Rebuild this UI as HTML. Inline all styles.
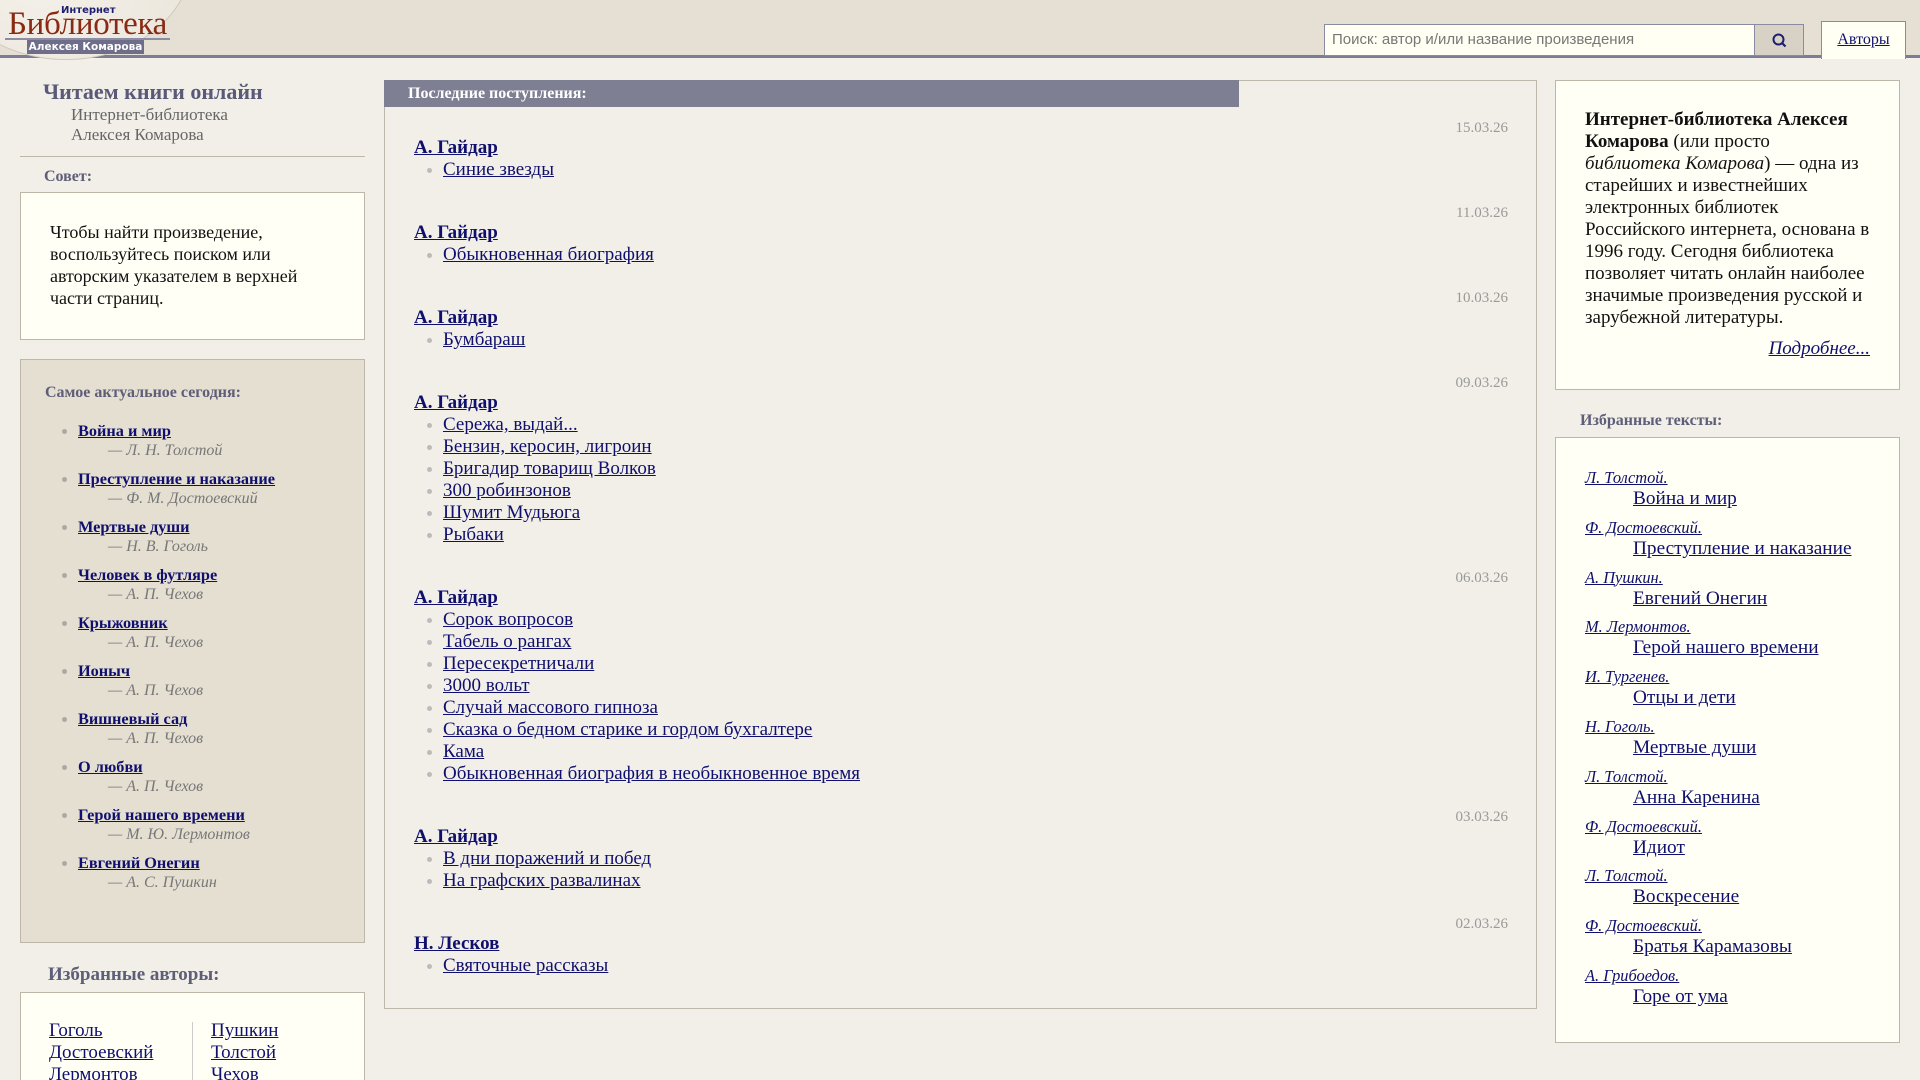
<!DOCTYPE html>
<html><head><meta charset="utf-8"><style>
*{box-sizing:border-box;margin:0;padding:0}
html{width:1920px;height:1080px;overflow:hidden}
body{width:1920px;height:1080px;overflow:hidden;background:#f2efe8;font-family:"Liberation Serif","Noto Serif CJK SC",serif;color:#111;position:relative}
a{color:#0f0f6e}
.hdr{position:absolute;left:0;top:0;width:1920px;height:58px;background:#e6e0d4;border-bottom:3px solid #7c7c96}
.arc{position:absolute;left:-60px;top:-140px;width:252px;height:200px;border-radius:50%;background:radial-gradient(ellipse at 40% 60%,#f4f1ea 0%,#ece7dd 70%,#e2dccf 100%);border:1px solid #cfc8b8}
.lg1{position:absolute;left:61px;top:5px;font:bold 10px "DejaVu Sans",sans-serif;color:#1e1e70}
.lg2{position:absolute;left:8px;top:6px;font:33px "Liberation Serif",serif;color:#8a2a14;letter-spacing:-0.3px}
.lgl{position:absolute;left:5px;top:38px;width:165px;height:2px;background:#8c8ca4}
.lg3{position:absolute;left:27px;top:40px;width:117px;height:14px;background:#6e6e8a;color:#fff;font:bold 10.5px "DejaVu Sans",sans-serif;text-align:center;line-height:14px}
.srch{position:absolute;left:1324px;top:24px;width:431px;height:32px;background:#fffff4;border:1px solid #8a8aa0;font:15px "Liberation Sans",sans-serif;color:#777;padding-left:7px;line-height:30px}
.sbtn{position:absolute;left:1755px;top:24px;width:49px;height:32px;background:#d8d2c6;border:1px solid #8a8aa0;border-left:none}
.auth{position:absolute;left:1821px;top:21px;width:85px;height:38px;background:#fffff4;border:1px solid #8a8aa0;border-bottom:none;text-align:center;line-height:36px;font-size:16px}
.title{position:absolute;left:43px;top:79px;font:bold 22px "Liberation Serif",serif;color:#5a5a78}
.sub{position:absolute;left:71px;top:105px;font:17px/20px "Liberation Serif",serif;color:#666}
.hr{position:absolute;left:20px;top:156px;width:345px;height:1px;background:#bdb7aa}
.lbl{position:absolute;font:bold 16px "Liberation Serif",serif;color:#5e5e78}
.box{position:absolute;border:1px solid #bdb7aa;background:#fffff5}
.tip{left:20px;top:192px;width:345px;height:148px;padding:28px 29px;font-size:18px;line-height:22px}
.act{left:20px;top:359px;width:345px;height:584px;background:#e5dfd2}
.act ul{position:absolute;left:57px;top:61px;list-style:none}
.act li{height:48px;position:relative}
.act li:before{content:"";position:absolute;left:-16px;top:8px;width:5px;height:5px;border-radius:50%;background:#aaa}
.act li a{font:bold 16.3px/20px "Liberation Serif",serif;display:block}
.act li i{display:block;margin-left:30px;font:16px/20px "Liberation Serif",serif;color:#777;font-style:italic}
.fa{left:20px;top:992px;width:345px;height:88px;border-bottom:none;overflow:hidden}
.fa .c{position:absolute;top:27px;font-size:19px;line-height:22px}
.fa .c a{display:block}
.bar{position:absolute;left:384px;top:80px;width:855px;height:27px;background:#7f7f94;color:#fff;font:bold 16px/27px "Liberation Serif",serif;padding-left:24px}
.mid{position:absolute;left:384px;top:80px;width:1153px;height:929px;border:1px solid #bdb7aa;padding:46px 28px 0 29px}
.ent{margin-bottom:31px;position:relative}
.d{text-align:right;color:#999;font-size:15px;line-height:22px;height:22px;position:relative;top:-10px;margin-bottom:-12px}
.ent .a{font:bold 19px/22px "Liberation Serif",serif;display:block}
.ent ul{list-style:none;margin-left:29px}
.ent li{font-size:19px;line-height:22px;position:relative}
.ent li:before{content:"";position:absolute;left:-16px;top:9px;width:5px;height:5px;border-radius:50%;background:#bbb}
.ri{left:1555px;top:80px;width:345px;height:310px;padding:28px 29px;font-size:19px;line-height:22px}
.ri .m{text-align:right;margin-top:9px;font-style:italic}
.ft{left:1555px;top:437px;width:345px;height:606px;padding:30px 29px}
.ft .w{height:49.8px}
.ft .w a{display:block}
.ft .w .u{font-style:italic;font-size:16.4px;line-height:20px}
.ft .w .t{margin-left:48px;font-size:19.3px;line-height:22px}
</style></head><body>
<div class="hdr">
<div class="arc"></div>
<div class="lg2">Библиотека</div>
<div class="lg1">Интернет</div>
<div class="lgl"></div>
<div class="lg3">Алексея Комарова</div>
<div class="srch">Поиск: автор и/или название произведения</div>
<div class="sbtn"><svg width="49" height="32" viewBox="0 0 49 32"><circle cx="23.5" cy="14.5" r="5" fill="none" stroke="#1e1e70" stroke-width="2"/><line x1="27" y1="18" x2="30.5" y2="21.5" stroke="#1e1e70" stroke-width="2.2"/></svg></div>
<div class="auth"><a href="#">Авторы</a></div>
</div>

<div class="title">Читаем книги онлайн</div>
<div class="sub">Интернет-библиотека<br>Алексея Комарова</div>
<div class="hr"></div>
<div class="lbl" style="left:44px;top:168px">Совет:</div>
<div class="box tip">Чтобы найти произведение, воспользуйтесь поиском или авторским указателем в верхней части страниц.</div>
<div class="box act">
<div class="lbl" style="left:24px;top:24px">Самое актуальное сегодня:</div>
<ul>
<li><a href="#">Война и мир</a><i>— Л. Н. Толстой</i></li>
<li><a href="#">Преступление и наказание</a><i>— Ф. М. Достоевский</i></li>
<li><a href="#">Мертвые души</a><i>— Н. В. Гоголь</i></li>
<li><a href="#">Человек в футляре</a><i>— А. П. Чехов</i></li>
<li><a href="#">Крыжовник</a><i>— А. П. Чехов</i></li>
<li><a href="#">Ионыч</a><i>— А. П. Чехов</i></li>
<li><a href="#">Вишневый сад</a><i>— А. П. Чехов</i></li>
<li><a href="#">О любви</a><i>— А. П. Чехов</i></li>
<li><a href="#">Герой нашего времени</a><i>— М. Ю. Лермонтов</i></li>
<li><a href="#">Евгений Онегин</a><i>— А. С. Пушкин</i></li>
</ul></div>
<div class="lbl" style="left:48px;top:964px;font-size:19px">Избранные авторы:</div>
<div class="box fa">
<div class="c" style="left:28px"><a href="#">Гоголь</a><a href="#">Достоевский</a><a href="#">Лермонтов</a></div>
<div style="position:absolute;left:171px;top:29px;width:1px;height:80px;background:#ccc"></div>
<div class="c" style="left:190px"><a href="#">Пушкин</a><a href="#">Толстой</a><a href="#">Чехов</a></div>
</div>

<div class="mid">
<div class="ent"><div class="d">15.03.26</div><a class="a" href="#">А. Гайдар</a><ul><li><a href="#">Синие звезды</a></li></ul></div>
<div class="ent"><div class="d">11.03.26</div><a class="a" href="#">А. Гайдар</a><ul><li><a href="#">Обыкновенная биография</a></li></ul></div>
<div class="ent"><div class="d">10.03.26</div><a class="a" href="#">А. Гайдар</a><ul><li><a href="#">Бумбараш</a></li></ul></div>
<div class="ent"><div class="d">09.03.26</div><a class="a" href="#">А. Гайдар</a><ul><li><a href="#">Сережа, выдай...</a></li><li><a href="#">Бензин, керосин, лигроин</a></li><li><a href="#">Бригадир товарищ Волков</a></li><li><a href="#">300 робинзонов</a></li><li><a href="#">Шумит Мудьюга</a></li><li><a href="#">Рыбаки</a></li></ul></div>
<div class="ent"><div class="d">06.03.26</div><a class="a" href="#">А. Гайдар</a><ul><li><a href="#">Сорок вопросов</a></li><li><a href="#">Табель о рангах</a></li><li><a href="#">Пересекретничали</a></li><li><a href="#">3000 вольт</a></li><li><a href="#">Случай массового гипноза</a></li><li><a href="#">Сказка о бедном старике и гордом бухгалтере</a></li><li><a href="#">Кама</a></li><li><a href="#">Обыкновенная биография в необыкновенное время</a></li></ul></div>
<div class="ent"><div class="d">03.03.26</div><a class="a" href="#">А. Гайдар</a><ul><li><a href="#">В дни поражений и побед</a></li><li><a href="#">На графских развалинах</a></li></ul></div>
<div class="ent"><div class="d">02.03.26</div><a class="a" href="#">Н. Лесков</a><ul><li><a href="#">Святочные рассказы</a></li></ul></div>
</div>
<div class="bar">Последние поступления:</div>

<div class="box ri"><b>Интернет-библиотека Алексея Комарова</b> (или просто <i>библиотека Комарова</i>) — одна из старейших и известнейших электронных библиотек Российского интернета, основана в 1996 году. Сегодня библиотека позволяет читать онлайн наиболее значимые произведения русской и зарубежной литературы.<div class="m"><a href="#">Подробнее...</a></div></div>
<div class="lbl" style="left:1580px;top:412px">Избранные тексты:</div>
<div class="box ft">
<div class="w"><a class="u" href="#">Л. Толстой.</a><a class="t" href="#">Война и мир</a></div>
<div class="w"><a class="u" href="#">Ф. Достоевский.</a><a class="t" href="#">Преступление и наказание</a></div>
<div class="w"><a class="u" href="#">А. Пушкин.</a><a class="t" href="#">Евгений Онегин</a></div>
<div class="w"><a class="u" href="#">М. Лермонтов.</a><a class="t" href="#">Герой нашего времени</a></div>
<div class="w"><a class="u" href="#">И. Тургенев.</a><a class="t" href="#">Отцы и дети</a></div>
<div class="w"><a class="u" href="#">Н. Гоголь.</a><a class="t" href="#">Мертвые души</a></div>
<div class="w"><a class="u" href="#">Л. Толстой.</a><a class="t" href="#">Анна Каренина</a></div>
<div class="w"><a class="u" href="#">Ф. Достоевский.</a><a class="t" href="#">Идиот</a></div>
<div class="w"><a class="u" href="#">Л. Толстой.</a><a class="t" href="#">Воскресение</a></div>
<div class="w"><a class="u" href="#">Ф. Достоевский.</a><a class="t" href="#">Братья Карамазовы</a></div>
<div class="w"><a class="u" href="#">А. Грибоедов.</a><a class="t" href="#">Горе от ума</a></div>
</div>
</body></html>
